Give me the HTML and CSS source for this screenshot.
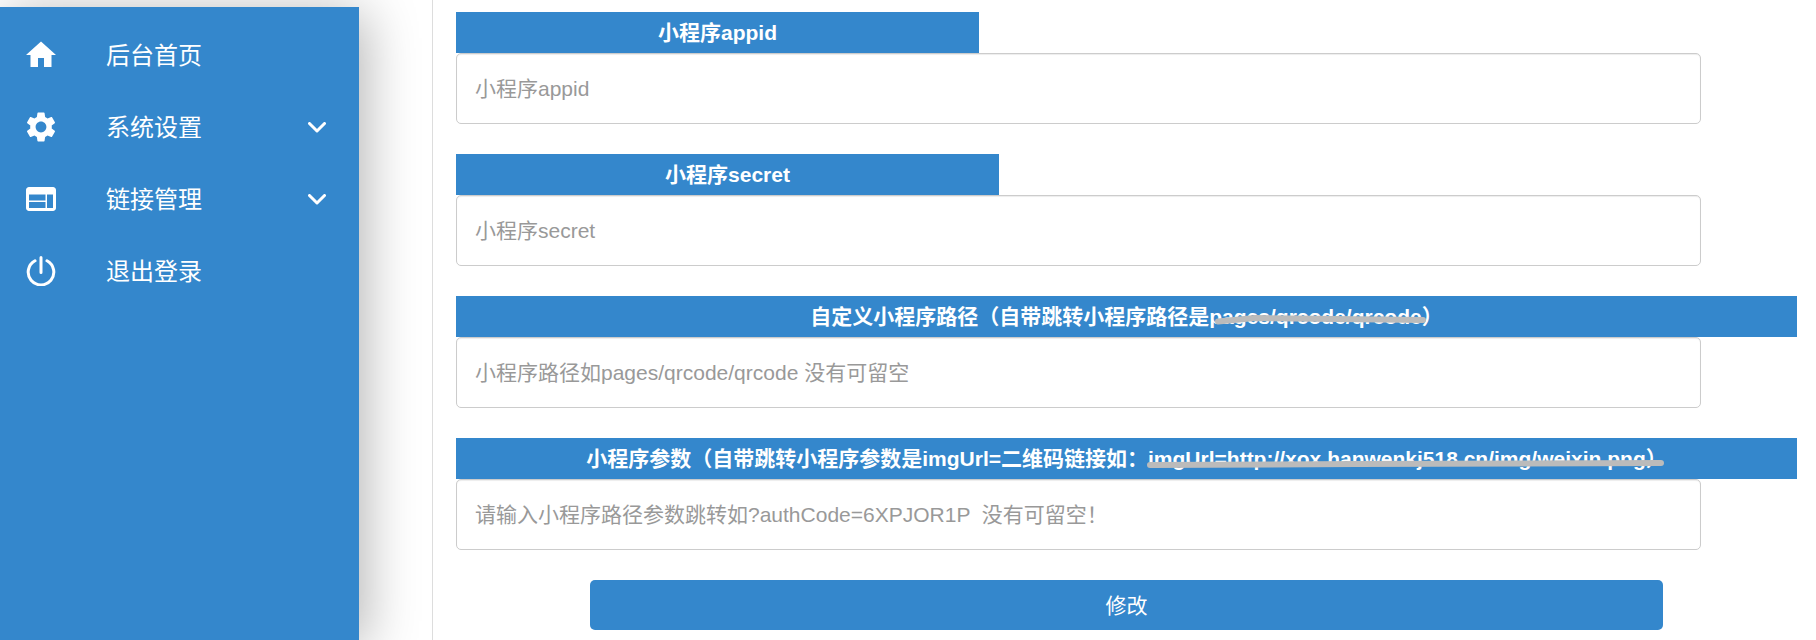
FILE: index.html
```html
<!DOCTYPE html>
<html lang="zh-CN">
<head>
    <meta charset="UTF-8">
    <meta name="viewport" content="width=device-width, initial-scale=1.0">
    <title>小程序设置</title>
    <link rel="stylesheet" href="styles.css">
</head>
<body>
    <div class="layout">
        <nav class="sidebar">
            <a class="nav-item" href="#">
                <svg class="nav-icon" viewBox="2 2 20 20"><path d="M10 20v-6h4v6h5v-8h3L12 3 2 12h3v8z"/></svg>
                <span class="nav-label">后台首页</span>
            </a>
            <a class="nav-item" href="#">
                <svg class="nav-icon" viewBox="2 2 20 20"><path d="M19.14 12.94c.04-.3.06-.61.06-.94 0-.32-.02-.64-.07-.94l2.03-1.58c.18-.14.23-.41.12-.61l-1.92-3.32c-.12-.22-.37-.29-.59-.22l-2.39.96c-.5-.38-1.03-.7-1.62-.94l-.36-2.54c-.04-.24-.24-.41-.48-.41h-3.84c-.24 0-.43.17-.47.41l-.36 2.54c-.59.24-1.13.57-1.62.94l-2.39-.96c-.22-.08-.47 0-.59.22L2.74 8.87c-.12.21-.08.47.12.61l2.03 1.58c-.05.3-.09.63-.09.94s.02.64.07.94l-2.03 1.58c-.18.14-.23.41-.12.61l1.92 3.32c.12.22.37.29.59.22l2.39-.96c.5.38 1.03.7 1.62.94l.36 2.54c.05.24.24.41.48.41h3.84c.24 0 .44-.17.47-.41l.36-2.54c.59-.24 1.13-.56 1.62-.94l2.39.96c.22.08.47 0 .59-.22l1.92-3.32c.12-.22.07-.47-.12-.61l-2.01-1.58zM12 15.6c-1.98 0-3.6-1.62-3.6-3.6s1.62-3.6 3.6-3.6 3.6 1.62 3.6 3.6-1.62 3.6-3.6 3.6z"/></svg>
                <span class="nav-label">系统设置</span>
                <svg class="nav-arrow" viewBox="0 0 18 11"><path d="M1.5 1.5 9 9l7.5-7.5"/></svg>
            </a>
            <a class="nav-item" href="#">
                <svg class="nav-icon" viewBox="2 2 20 20"><path d="M20 4H4c-1.1 0-1.99.9-1.99 2L2 18c0 1.1.9 2 2 2h16c1.1 0 2-.9 2-2V6c0-1.1-.9-2-2-2zm-5 14H4v-4h11v4zm0-5H4V9h11v4zm5 5h-4V9h4v9z"/></svg>
                <span class="nav-label">链接管理</span>
                <svg class="nav-arrow" viewBox="0 0 18 11"><path d="M1.5 1.5 9 9l7.5-7.5"/></svg>
            </a>
            <a class="nav-item" href="#">
                <svg class="nav-icon nav-icon-line" viewBox="0 0 30 30"><path d="M15 1.5v15M9 4.8a12.8 12.8 0 1 0 12 0"/></svg>
                <span class="nav-label">退出登录</span>
            </a>
        </nav>

        <main class="content">
            <form class="settings-form">
                <div class="field">
                    <label class="field-title title-appid">小程序appid</label>
                    <input class="field-input" type="text" placeholder="小程序appid">
                </div>
                <div class="field">
                    <label class="field-title title-secret">小程序secret</label>
                    <input class="field-input" type="text" placeholder="小程序secret">
                </div>
                <div class="field">
                    <label class="field-title">自定义小程序路径（自带跳转小程序路径是pages/qrcode/qrcode）
                        <svg class="scribble" viewBox="0 0 1341 41"><path d="M762 25.5 799 22 967 24"/></svg>
                    </label>
                    <input class="field-input" type="text" placeholder="小程序路径如pages/qrcode/qrcode 没有可留空">
                </div>
                <div class="field">
                    <label class="field-title">小程序参数（自带跳转小程序参数是imgUrl=二维码链接如：imgUrl=http://xox.hanwenkj518.cn/img/weixin.png）
                        <svg class="scribble" viewBox="0 0 1341 41"><path d="M694 27 900 26 1205 25"/></svg>
                    </label>
                    <input class="field-input" type="text" placeholder="请输入小程序路径参数跳转如?authCode=6XPJOR1P  没有可留空！">
                </div>
                <button class="submit-btn" type="button">修改</button>
            </form>
        </main>
    </div>
</body>
</html>
```

FILE: styles.css
```css
* {
    box-sizing: border-box;
}
body {
    margin: 0;
    height: 640px;
    overflow: hidden;
    background: #fff;
    font-family: "Liberation Sans", "Noto Sans CJK SC", sans-serif;
}
.layout {
    display: flex;
    height: 640px;
}
.sidebar {
    width: 359px;
    flex-shrink: 0;
    margin-top: 7px;
    padding-top: 12px;
    background: #3487cc;
    box-shadow: 6px 6px 50px rgba(0, 0, 0, .3);
}
.nav-item {
    display: flex;
    align-items: center;
    height: 72px;
    padding-left: 26px;
    color: #fff;
    text-decoration: none;
}
.nav-icon {
    width: 30px;
    height: 30px;
    fill: #fff;
}
.nav-icon-line {
    fill: none;
    stroke: #fff;
    stroke-width: 3;
    stroke-linecap: round;
}
.nav-label {
    margin-left: 50px;
    margin-bottom: 4px;
    font-size: 24px;
}
.nav-arrow {
    width: 18px;
    height: 11px;
    margin-left: auto;
    margin-right: 33px;
    fill: none;
    stroke: #fff;
    stroke-width: 3;
    stroke-linecap: round;
    stroke-linejoin: round;
}
.content {
    flex: 1;
    margin-left: 73px;
    padding: 12px 0 0 23px;
    border-left: 1px solid #ddd;
}
.field {
    margin-bottom: 30px;
}
.field-title {
    position: relative;
    display: block;
    width: 1341px;
    height: 41px;
    background: #3487cc;
    color: #fff;
    font-size: 21px;
    font-weight: bold;
    line-height: 41px;
    text-align: center;
}
.title-appid {
    width: 523px;
}
.title-secret {
    width: 543px;
}
.scribble {
    position: absolute;
    left: 0;
    top: 0;
    width: 100%;
    height: 100%;
    fill: none;
    stroke: #bbb;
    stroke-width: 6;
    stroke-linecap: round;
    stroke-linejoin: round;
}
.field-input {
    display: block;
    width: 1245px;
    height: 71px;
    padding: 0 18px;
    border: 1px solid #ccc;
    border-radius: 5px;
    box-shadow: inset 0 1px 1px rgba(0, 0, 0, .075);
    font-family: inherit;
    font-size: 21px;
    outline: none;
}
.field-input::placeholder {
    color: #999;
    opacity: 1;
}
.submit-btn {
    display: block;
    width: 1073px;
    height: 50px;
    margin-left: 134px;
    padding-bottom: 4px;
    border: none;
    border-radius: 5px;
    background: #3487cc;
    color: #fff;
    font-family: inherit;
    font-size: 21px;
}
```
